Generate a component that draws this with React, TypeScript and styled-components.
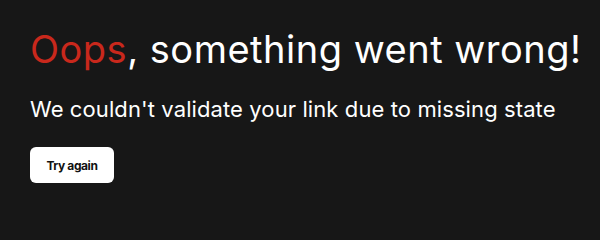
import React from "react";
import styled, { createGlobalStyle } from "styled-components";

const Global = createGlobalStyle`
  html, body { margin: 0; padding: 0; background: #171717; }
  body { font-family: Inter, "Noto Sans", sans-serif; color: #fff; }
`;

const Page = styled.main`
  box-sizing: border-box;
  width: 600px;
  height: 240px;
  padding: 26px 30px;
  display: flex;
  flex-direction: column;
  align-items: flex-start;
`;

const Title = styled.h1`
  margin: 0;
  font-size: 38px;
  font-weight: 400;
  line-height: 46px;
  letter-spacing: 0.5px;
  white-space: nowrap;
`;

const Accent = styled.span`
  color: #c9281c;
`;

const Message = styled.p`
  margin: 22px 0 0;
  font-size: 22px;
  font-weight: 400;
  line-height: 30px;
  letter-spacing: 0.1px;
  white-space: nowrap;
`;

const Button = styled.button`
  margin-top: 23px;
  width: 84px;
  height: 36px;
  padding: 0;
  border: none;
  border-radius: 6px;
  background: #fff;
  color: #111;
  font-family: Inter, "Noto Sans", sans-serif;
  font-size: 12px;
  font-weight: 700;
  letter-spacing: -0.4px;
  cursor: pointer;
`;

export default function App() {
  return (
    <>
      <Global />
      <Page>
        <Title>
          <Accent>Oops</Accent>, something went wrong!
        </Title>
        <Message>We couldn't validate your link due to missing state</Message>
        <Button>Try again</Button>
      </Page>
    </>
  );
}
